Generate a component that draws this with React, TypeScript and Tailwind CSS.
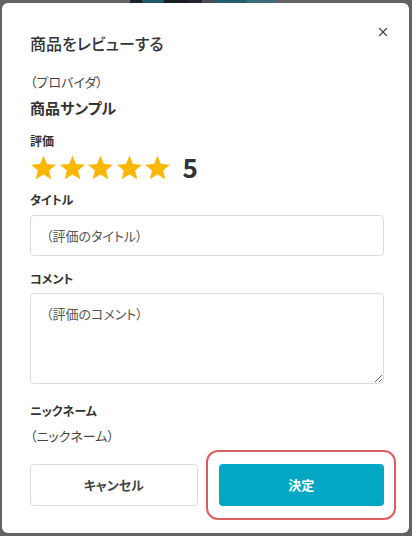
import { X } from "lucide-react";

function Star() {
  return (
    <svg viewBox="0 0 24 24" className="h-[27px] w-[27px]" fill="#fbb700">
      <path d="M12 1.5l3.1 7.4 8 .6-6.1 5.2 1.9 7.8L12 18.3l-6.9 4.2 1.9-7.8L.9 9.5l8-.6z" />
    </svg>
  );
}

export default function App() {
  return (
    <div className="flex h-[536px] w-[412px] flex-col bg-[#636363] font-['Noto_Sans_CJK_JP','Noto_Sans',sans-serif] text-[#333] [font-feature-settings:'palt']">
      <div className="flex h-[3px] shrink-0 pl-[130px]">
        <div className="w-[12px] bg-[#1d2228]" />
        <div className="w-[22px] bg-[#1d5a68]" />
        <div className="w-[24px] bg-[#1a1d24]" />
        <div className="w-[14px] bg-[#22262c]" />
        <div className="w-[14px] bg-[#4a4e55]" />
        <div className="w-[30px] bg-[#215f6c]" />
        <div className="w-[30px] bg-[#3b6d78]" />
      </div>
      <div className="ml-[2px] mr-[3px] flex h-[530px] flex-col rounded-[6px] bg-white pl-[28px] pr-[25px] pt-[28px]">
        <div className="flex items-start justify-between">
          <h1 className="text-[16px] font-medium leading-[24px]">商品をレビューする</h1>
          <X className="mr-[-6px] mt-[-6px] h-[14px] w-[14px] text-[#444]" strokeWidth={2.2} />
        </div>
        <p className="mt-[17px] text-[13px] leading-[20px] text-[#444]">（プロバイダ）</p>
        <p className="mt-[5px] text-[15px] font-bold leading-[22px]">商品サンプル</p>
        <p className="mt-[13px] text-[12px] font-bold leading-[18px]">評価</p>
        <div className="mt-[2px] flex h-[30px] items-center gap-[1.5px]">
          <Star />
          <Star />
          <Star />
          <Star />
          <Star />
          <span className="ml-[10px] text-[26px] font-bold leading-[30px] text-[#2e3338]">5</span>
        </div>
        <p className="mt-[9px] text-[12px] font-bold leading-[18px]">タイトル</p>
        <input
          type="text"
          placeholder="（評価のタイトル）"
          className="mt-[6px] h-[41px] w-full rounded-[4px] border border-[#dcdcdc] px-[15px] text-[13px] outline-none [font-feature-settings:'palt'] placeholder:text-[#555]"
        />
        <p className="mt-[14px] text-[12px] font-bold leading-[18px]">コメント</p>
        <textarea
          placeholder="（評価のコメント）"
          className="mt-[5px] h-[91px] w-full resize-y rounded-[4px] border border-[#dcdcdc] px-[15px] py-[10px] text-[13px] leading-[20px] outline-none [font-feature-settings:'palt'] placeholder:text-[#555]"
        />
        <p className="mt-[18px] text-[12px] font-bold leading-[18px]">ニックネーム</p>
        <p className="mt-[6px] text-[13px] leading-[20px] text-[#444]">（ニックネーム）</p>
        <div className="mt-[18px] flex gap-[21px]">
          <button className="h-[42px] flex-1 rounded-[4px] border border-[#dcdcdc] bg-white text-[13px] font-bold text-[#444]">
            キャンセル
          </button>
          <div className="relative flex-1">
            <button className="h-[42px] w-full rounded-[4px] bg-[#02a7c4] text-[13px] font-bold text-white">
              決定
            </button>
            <div className="absolute bottom-[-14px] left-[-13px] right-[-12px] top-[-14px] rounded-[12px] border-2 border-[#dc5f5f]" />
          </div>
        </div>
      </div>
    </div>
  );
}
